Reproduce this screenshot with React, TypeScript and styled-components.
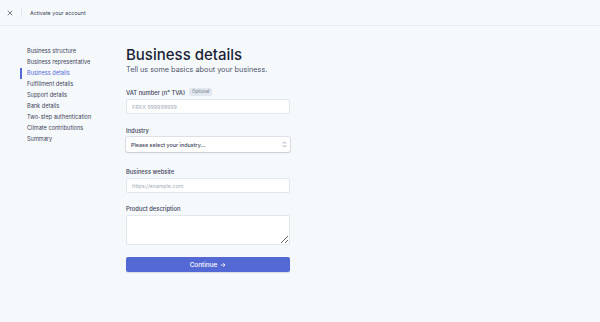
import React from "react";
import styled, { createGlobalStyle } from "styled-components";

const GlobalStyle = createGlobalStyle`
    html, body {
        margin: 0;
        padding: 0;
        background: #f6f9fc;
        font-family: Inter, "Liberation Sans", sans-serif;
        color: #3c4257;
    }
    * {
        box-sizing: border-box;
    }
`;

const Page = styled.div`
    width: 600px;
    height: 322px;
    background: #f6f9fc;
    display: flex;
    flex-direction: column;
`;

const Header = styled.header`
    height: 26px;
    border-bottom: 1px solid #ebeef1;
    display: flex;
    align-items: center;
    padding-left: 7px;
    flex-shrink: 0;
`;

const Close = styled.button`
    width: 6px;
    height: 6px;
    padding: 0;
    border: none;
    background: none;
    display: flex;
    align-items: center;
    justify-content: center;
    color: #697386;
`;

const Divider = styled.span`
    width: 1px;
    height: 9px;
    background: #e3e8ee;
    margin: 0 8px 0 8px;
`;

const HeaderTitle = styled.span`
    font-size: 5.4px;
    color: #3c4257;
`;

const Body = styled.div`
    display: flex;
    padding-left: 20px;
`;

const Sidebar = styled.nav`
    width: 106px;
    padding-top: 20px;
    display: flex;
    flex-direction: column;
`;

const NavItem = styled.a<{ $active?: boolean }>`
    display: block;
    height: 11px;
    line-height: 11px;
    font-size: 5.6px;
    font-weight: 400;
    padding-left: 5px;
    border-left: 2px solid ${(p) => (p.$active ? "#5469d4" : "transparent")};
    color: ${(p) => (p.$active ? "#5469d4" : "#3c4257")};
    text-decoration: none;
`;

const Main = styled.main`
    width: 164px;
    padding-top: 20px;
`;

const Title = styled.h1`
    margin: 0;
    font-size: 15px;
    line-height: 18px;
    font-weight: 500;
    color: #1a1f36;
`;

const Subtitle = styled.p`
    margin: 1px 0 0;
    font-size: 7.3px;
    line-height: 10px;
    color: #4f566b;
`;

const Field = styled.div<{ $top: number }>`
    margin-top: ${(p) => p.$top}px;
    display: flex;
    flex-direction: column;
`;

const LabelRow = styled.div`
    display: flex;
    align-items: center;
    height: 10px;
    margin-bottom: 2px;
`;

const Label = styled.label`
    font-size: 5.8px;
    font-weight: 500;
    color: #3c4257;
`;

const Badge = styled.span`
    margin-left: 4px;
    padding: 1px 3px;
    border-radius: 2px;
    background: #e3e8ee;
    color: #697386;
    font-size: 4.4px;
    line-height: 6px;
`;

const Input = styled.input`
    height: 15px;
    width: 100%;
    border: 1px solid #e3e8ee;
    border-radius: 2px;
    background: #fff;
    padding: 0 5px;
    font-family: inherit;
    font-size: 5.3px;
    color: #3c4257;
    outline: none;
    &::placeholder {
        color: #a3acb9;
    }
`;

const Select = styled.div`
    height: 15px;
    width: 100%;
    border-radius: 2px;
    background: #fff;
    box-shadow: 0 0 0 1px rgba(60, 66, 87, 0.12), 0 1px 2px rgba(60, 66, 87, 0.14);
    display: flex;
    align-items: center;
    justify-content: space-between;
    padding: 0 3px 0 5px;
    font-size: 5.4px;
    font-weight: 500;
    color: #3c4257;
`;

const TextArea = styled.textarea`
    height: 30px;
    width: 100%;
    border: 1px solid #e3e8ee;
    border-radius: 2px;
    background: #fff;
    resize: vertical;
    outline: none;
`;

const Button = styled.button`
    margin-top: 12px;
    width: 100%;
    height: 15px;
    border: none;
    border-radius: 2px;
    background: #5469d4;
    box-shadow: 0 1px 1px rgba(0, 0, 0, 0.12);
    color: #fff;
    font-family: inherit;
    font-size: 6.4px;
    font-weight: 500;
    display: flex;
    align-items: center;
    justify-content: center;
    gap: 3px;
`;

const steps = [
    "Business structure",
    "Business representative",
    "Business details",
    "Fulfillment details",
    "Support details",
    "Bank details",
    "Two-step authentication",
    "Climate contributions",
    "Summary",
];

export default function App() {
    return (
        <Page>
            <GlobalStyle />
            <Header>
                <Close aria-label="Close">
                    <svg width="6" height="6" viewBox="0 0 6 6">
                        <path d="M1 1L5 5M5 1L1 5" stroke="#697386" strokeWidth="0.9" strokeLinecap="round" />
                    </svg>
                </Close>
                <Divider />
                <HeaderTitle>Activate your account</HeaderTitle>
            </Header>
            <Body>
                <Sidebar>
                    {steps.map((s) => (
                        <NavItem key={s} $active={s === "Business details"}>
                            {s}
                        </NavItem>
                    ))}
                </Sidebar>
                <Main>
                    <Title>Business details</Title>
                    <Subtitle>Tell us some basics about your business.</Subtitle>

                    <Field $top={12}>
                        <LabelRow>
                            <Label>VAT number (n° TVA)</Label>
                            <Badge>Optional</Badge>
                        </LabelRow>
                        <Input placeholder="FRXX 999999999" />
                    </Field>

                    <Field $top={11}>
                        <LabelRow>
                            <Label>Industry</Label>
                        </LabelRow>
                        <Select>
                            <span>Please select your industry...</span>
                            <svg width="5" height="7" viewBox="0 0 5 7">
                                <path d="M1 2.6L2.5 1.1L4 2.6M1 4.4L2.5 5.9L4 4.4" stroke="#697386" strokeWidth="0.7" fill="none" />
                            </svg>
                        </Select>
                    </Field>

                    <Field $top={14}>
                        <LabelRow>
                            <Label>Business website</Label>
                        </LabelRow>
                        <Input placeholder="https://example.com" />
                    </Field>

                    <Field $top={10}>
                        <LabelRow>
                            <Label>Product description</Label>
                        </LabelRow>
                        <TextArea />
                    </Field>

                    <Button>
                        Continue
                        <svg width="6" height="6" viewBox="0 0 6 6">
                            <path d="M0.8 3H5M3.2 1.2L5 3L3.2 4.8" stroke="#fff" strokeWidth="0.8" fill="none" />
                        </svg>
                    </Button>
                </Main>
            </Body>
        </Page>
    );
}
